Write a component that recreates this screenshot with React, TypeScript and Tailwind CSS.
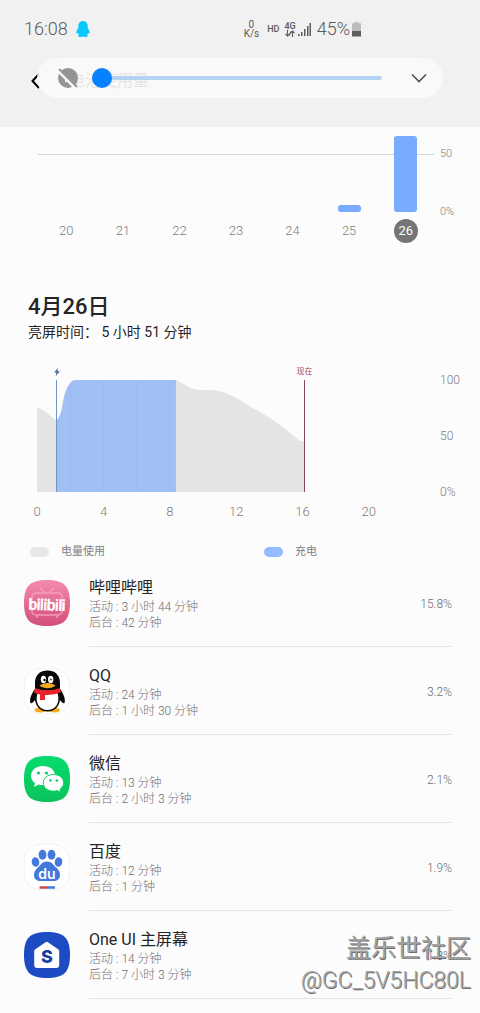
import React from "react";

const DAYS = [
  { day: "20", value: 0 },
  { day: "21", value: 0 },
  { day: "22", value: 0 },
  { day: "23", value: 0 },
  { day: "24", value: 0 },
  { day: "25", value: 7 },
  { day: "26", value: 76, selected: true },
];

const HOURS = ["0", "4", "8", "12", "16", "20"];

const APPS = [
  { name: "哔哩哔哩", active: "3 小时 44 分钟", background: "42 分钟", usage: "15.8%", icon: <BilibiliIcon /> },
  { name: "QQ", active: "24 分钟", background: "1 小时 30 分钟", usage: "3.2%", icon: <QQIcon /> },
  { name: "微信", active: "13 分钟", background: "2 小时 3 分钟", usage: "2.1%", icon: <WechatIcon /> },
  { name: "百度", active: "12 分钟", background: "1 分钟", usage: "1.9%", icon: <BaiduIcon /> },
  { name: "One UI 主屏幕", active: "14 分钟", background: "7 小时 3 分钟", usage: "1.8%", icon: <HomeIcon /> },
];

// rounded "squircle" shared by all launcher icons
const SQUIRCLE = "M23 0C40 0 46 6 46 23S40 46 23 46 0 40 0 23 6 0 23 0Z";

export default function App() {
  return (
    <div className="relative min-h-screen overflow-hidden bg-[#fcfcfc] font-[Roboto,'Noto_Sans_CJK_SC',sans-serif] text-[#252525]">
      <Header />
      <main>
        <DailyChart />
        <section className="px-7 pt-[50px]">
          <h2 className="text-[22px] leading-7 font-medium">4月26日</h2>
          <p className="text-sm leading-[22px]">亮屏时间： 5 小时 51 分钟</p>
        </section>
        <BatteryChart />
        <ul>
          {APPS.map((app) => (
            <AppRow key={app.name} {...app} />
          ))}
        </ul>
      </main>
      <Watermark />
    </div>
  );
}

function Header() {
  return (
    <header className="relative h-[127px] bg-[#f1f1f1]">
      <div className="flex h-[58px] items-center pl-6 text-[#5c5c5c]">
        <span className="text-[18px] leading-6 font-light">16:08</span>
        <svg className="ml-2 h-4 w-[14px]" viewBox="0 0 14 16" fill="#08c7fb">
          <path d="M7 0C4 0 2.300 2 2.300 5v2C1 9 0 11 .3 12.500c.3.500 1-.2 1.500-.7.2 1 .7 1.700 1.300 2.300-.8.300-1.100.8-1 1.400 1.500.7 3.500.6 4.900 0 1.400.6 3.400.7 4.900 0 .1-.6-.2-1.100-1-1.400.6-.6 1.100-1.300 1.300-2.300.5.5 1.200 1.200 1.500.7.3-1.500-.7-3.500-2-5.500V5C11.700 2 10 0 7 0Z" />
        </svg>
        <div className="ml-auto flex items-center pr-[119px]">
          <div className="text-center text-[10px] leading-[9px]">
            <div>0</div>
            <div>K/s</div>
          </div>
          <span className="ml-2 text-[9px] leading-3 font-medium">HD</span>
          <div className="ml-[5px] flex flex-col items-center">
            <span className="text-[9px] leading-[8px] font-medium">4G</span>
            <svg className="h-[7px] w-[10px]" viewBox="0 0 10 7" fill="none" stroke="currentColor" strokeWidth="1.1">
              <path d="M2.500 0v6M.5 4l2 2 2-2M7.500 7V1M5.500 3l2-2 2 2M4.200 5.500l1.800-4" />
            </svg>
          </div>
          <svg className="ml-[2px] h-[13px] w-[13px]" viewBox="0 0 13 13" fill="currentColor">
            <path d="M0 11h1.500v2H0zM3 9h1.500v4H3zM6 6h1.500v7H6zM9 3h1.500v10H9zM11.500 0H13v13h-1.500z" />
          </svg>
          <span className="ml-[6px] text-[18px] leading-6 font-light">45%</span>
          <svg className="ml-[2px] h-[15px] w-[9px]" viewBox="0 0 9 15">
            <path d="M2.500 0h4v1.200H9V9H0V1.200h2.500z" fill="#bdbdbd" />
            <path d="M0 9h9v5.500H0z" fill="#5c5c5c" />
          </svg>
        </div>
      </div>

      <div className="flex h-[46px] items-center pl-[31px]">
        <button aria-label="返回" className="text-black">
          <svg className="h-4 w-[9px]" viewBox="0 0 9 16" fill="none" stroke="currentColor" strokeWidth="2">
            <path d="M8 1 1.500 8 8 15" />
          </svg>
        </button>
        <h1 className="ml-[29px] text-base leading-6">电池使用量</h1>
      </div>

      <VolumePanel />
    </header>
  );
}

function VolumePanel() {
  return (
    <div className="absolute inset-x-[37px] top-[58px] flex h-10 items-center rounded-full bg-[#fafafa]/90 pr-4 pl-[21px]">
      <svg className="h-5 w-5 shrink-0" viewBox="0 0 20 20">
        <circle cx="10" cy="10" r="10" fill="#949494" />
        <path d="M7 8.500v6l5-3z" fill="#f9f9f9" />
        <path d="M-1 1 18 20" stroke="#fafafa" strokeWidth="4" />
        <path d="M1 1 19 19" stroke="#949494" strokeWidth="2" />
      </svg>
      <input
        type="range"
        aria-label="媒体音量"
        min="0"
        max="100"
        defaultValue="0"
        className="ml-[14px] h-5 min-w-0 flex-1 appearance-none bg-transparent [&::-webkit-slider-runnable-track]:h-1 [&::-webkit-slider-runnable-track]:rounded-full [&::-webkit-slider-runnable-track]:bg-[#b4d3f2] [&::-webkit-slider-thumb]:-mt-2 [&::-webkit-slider-thumb]:h-5 [&::-webkit-slider-thumb]:w-5 [&::-webkit-slider-thumb]:appearance-none [&::-webkit-slider-thumb]:rounded-full [&::-webkit-slider-thumb]:bg-[#0681ff]"
      />
      <button aria-label="展开" className="ml-[29px]">
        <svg className="h-[10px] w-4" viewBox="0 0 16 10" fill="none" stroke="#555" strokeWidth="1.700">
          <path d="M1 1.500 8 8.500l7-7" />
        </svg>
      </button>
    </div>
  );
}

function DailyChart() {
  return (
    <section className="flex pt-[9px] pl-[38px]">
      <div className="relative flex-1">
        <div className="absolute inset-x-0 top-[18px] h-px bg-[#d6d6d6]" />
        <div className="relative grid grid-cols-7">
          {DAYS.map((d) => (
            <div key={d.day} className="flex flex-col items-center">
              <div className="flex h-[76px] items-end">
                <div className="w-[23px] rounded-[3px] bg-[#79abff]" style={{ height: d.value }} />
              </div>
              <div
                className={`mt-[7px] flex h-6 w-6 items-center justify-center rounded-full text-[13px] leading-4 ${
                  d.selected ? "bg-[#757575] text-white" : "font-light text-[#7d7d7d]"
                }`}
              >
                {d.day}
              </div>
            </div>
          ))}
        </div>
      </div>
      <div className="flex h-[84px] w-[46px] flex-col justify-between pt-[10px] pl-[6px] text-[11px] leading-4 font-light text-[#7d7d7d]">
        <span>50</span>
        <span>0%</span>
      </div>
    </section>
  );
}

function BatteryChart() {
  return (
    <section className="pt-[37px]">
      <div className="flex pl-[37px]">
        <div className="relative flex-1">
          <svg className="block h-[112px] w-full" viewBox="0 0 398 112" preserveAspectRatio="none">
            <path
              d="M0 28C9 29 13 37 20 41V112H0ZM139 0C149 5 153 9 162 10C172 10 178 9 188 13C202 18 213 27 226 34C241 42 252 52 263 61H267V112H139Z"
              fill="#e4e4e4"
            />
            <path d="M20 40C24 35 25 28 26 22C28 11 31 3 37 0H139V112H20Z" fill="#9fbff5" />
            <path d="M33.500 3V112M66.500 0V112M99.500 0V112M132.500 0V112" stroke="#9abbf2" />
            <path d="M19.500 0V112" stroke="#7295c4" />
            <path d="M267.500 0V112" stroke="#874d55" />
          </svg>
          <svg className="absolute -top-3 left-[4.9%] h-2 w-[6px] -translate-x-1/2" viewBox="0 0 6 8" fill="#4c729f">
            <path d="M3.800 0 0 4.600h2.300L1.800 8 6 3.300H3.600z" />
          </svg>
          <span className="absolute -top-[14px] left-[67.2%] -translate-x-1/2 text-[8px] leading-3 whitespace-nowrap text-[#b0455a]">
            现在
          </span>
        </div>
        <div className="-my-2 flex w-[45px] flex-col justify-between pl-[5px] text-xs leading-4 font-light text-[#7d7d7d]">
          <span>100</span>
          <span>50</span>
          <span>0%</span>
        </div>
      </div>
      <div className="mt-3 mr-[78px] ml-1 grid grid-cols-6 text-center text-[13px] leading-4 font-light text-[#7d7d7d]">
        {HOURS.map((h) => (
          <span key={h}>{h}</span>
        ))}
      </div>
      <div className="mt-[25px] grid grid-cols-[234px_1fr] pl-[30px] text-[11px] leading-[14px] text-[#828282]">
        <div className="flex items-center gap-3">
          <span className="h-[10px] w-[19px] rounded-full bg-[#e8e8e8]" />
          电量使用
        </div>
        <div className="flex items-center gap-3">
          <span className="h-[10px] w-[19px] rounded-full bg-[#94baff]" />
          充电
        </div>
      </div>
    </section>
  );
}

function AppRow({
  name,
  active,
  background,
  usage,
  icon,
}: {
  name: string;
  active: string;
  background: string;
  usage: string;
  icon: React.ReactNode;
}) {
  return (
    <li className="flex h-[88px] items-stretch pr-7 pl-6">
      <div className="flex w-[65px] items-center">{icon}</div>
      <div className="flex flex-1 items-center justify-between border-b border-[#e3e3e3] pt-[3px]">
        <div>
          <div className="text-base leading-[22px]">{name}</div>
          <div className="text-xs leading-4 font-light text-[#6e6e6e]">活动 : {active}</div>
          <div className="text-xs leading-4 font-light text-[#6e6e6e]">后台 : {background}</div>
        </div>
        <span className="text-xs leading-4 font-light text-[#6e6e6e]">{usage}</span>
      </div>
    </li>
  );
}

function Watermark() {
  return (
    <div className="absolute right-[9px] bottom-[16px] text-right text-[#a3a3a3] [text-shadow:1px_1px_0_#707070]">
      <div className="text-[25px] leading-8">盖乐世社区</div>
      <div className="text-[23px] leading-8 font-light">@GC_5V5HC80L</div>
    </div>
  );
}

function BilibiliIcon() {
  return (
    <svg className="h-[46px] w-[46px]" viewBox="0 0 46 46">
      <defs>
        <linearGradient id="bili" x1="0" y1="0" x2="0" y2="1">
          <stop offset="0" stopColor="#f48bad" />
          <stop offset="1" stopColor="#d24e78" />
        </linearGradient>
      </defs>
      <path d={SQUIRCLE} fill="url(#bili)" />
      <g fill="none" stroke="#f9aac4" strokeWidth="2" opacity=".6">
        <rect x="8" y="13" width="30" height="22" rx="4" />
        <path d="m16 8 5 5M30 8l-5 5M13 36v2M33 36v2" />
      </g>
      <text
        x="23"
        y="30"
        textAnchor="middle"
        fill="#fff"
        stroke="#fff"
        strokeWidth="0.8"
        fontFamily="'Liberation Sans', sans-serif"
        fontSize="15"
        transform="rotate(2 23 23)"
      >
        bilibili
      </text>
    </svg>
  );
}

function QQIcon() {
  return (
    <svg className="h-[46px] w-[46px]" viewBox="0 0 46 46">
      <path d={SQUIRCLE} fill="#fff" stroke="#ececec" strokeWidth="0.8" />
      <ellipse cx="16.500" cy="42" rx="6" ry="2.500" fill="#f6ab1c" />
      <ellipse cx="30" cy="42" rx="6" ry="2.500" fill="#f6ab1c" />
      <path
        d="M23.500 2.500C15 2.500 11 8 11 15v6C8 25 5 31 6.500 35c1 1 3-1 4.500-3 1 7 6 11.500 12.500 11.500S35 39 36 32c1.500 2 3.500 4 4.500 3C42 31 39 25 36 21v-6C36 8 32 2.500 23.500 2.500Z"
        fill="#080808"
      />
      <path d="M13.500 25c-3 10 2 17 10 17S36.500 35 33.500 25Z" fill="#fff" />
      <path d="M11 20c8 3 17 3 25 0l1 4c-3 2-9 3-16 3v5h-5v-5.500c-3-.5-5-1-6-2.500Z" fill="#e9232b" />
      <ellipse cx="19.500" cy="11.500" rx="2.700" ry="3.700" fill="#fff" />
      <ellipse cx="26.700" cy="11.500" rx="2.700" ry="3.700" fill="#fff" />
      <circle cx="20.500" cy="12" r="1.200" />
      <path d="M25.500 12q1.200-2 2.400 0" fill="none" stroke="#000" />
      <path d="M15.500 17.500c5-3.500 11-3.500 16 0-4 3.500-12 3.500-16 0Z" fill="#f6ab1c" />
    </svg>
  );
}

function WechatIcon() {
  return (
    <svg className="h-[46px] w-[46px]" viewBox="0 0 46 46">
      <defs>
        <linearGradient id="wechat" x1="0" y1="0" x2="0" y2="1">
          <stop offset="0" stopColor="#05dc6e" />
          <stop offset="1" stopColor="#0bc25b" />
        </linearGradient>
      </defs>
      <path d={SQUIRCLE} fill="url(#wechat)" />
      <path d="M19 10C12 10 7 14 7 20c0 3 1.500 5.500 4 7l-1 4 4.500-2.500c1.500.5 3 .5 4.500.5 7 0 12-4 12-9.500S26 10 19 10Z" fill="#fff" />
      <path
        d="M29.500 18.500c-6 0-10.200 3.500-10.200 8.300s4.200 8.400 10.200 8.400c1.300 0 2.600-.2 3.800-.6l3.600 2-1-3.200c2.300-1.600 3.800-3.900 3.800-6.600 0-4.800-4.200-8.300-10.200-8.300Z"
        fill="#fff"
        stroke="#07ce62"
      />
      <g fill="#07ce62">
        <circle cx="14.500" cy="17" r="1.600" />
        <circle cx="22.500" cy="17" r="1.600" />
        <circle cx="26.300" cy="24.500" r="1.300" />
        <circle cx="32.800" cy="24.500" r="1.300" />
      </g>
    </svg>
  );
}

function BaiduIcon() {
  return (
    <svg className="h-[46px] w-[46px]" viewBox="0 0 46 46">
      <path d={SQUIRCLE} fill="#fff" stroke="#ececec" strokeWidth="0.8" />
      <g fill="#4379df">
        <ellipse cx="11.500" cy="18" rx="3.800" ry="4.700" transform="rotate(-8 11.500 18)" />
        <ellipse cx="18.500" cy="10.700" rx="3.900" ry="5" />
        <ellipse cx="27.500" cy="10.700" rx="3.900" ry="5" />
        <ellipse cx="34.500" cy="18" rx="3.800" ry="4.700" transform="rotate(8 34.500 18)" />
        <path d="M23 17.500c-4.500 0-6 3-8.500 5.500-3 2.500-4.500 4.500-4.500 8 0 4 3 6 6.500 6h13c3.500 0 6.500-2 6.500-6 0-3.500-1.500-5.500-4.500-8-2.500-2.500-4-5.500-8.500-5.500Z" />
      </g>
      <text x="23" y="34.500" textAnchor="middle" fill="#fff" fontFamily="Inter, sans-serif" fontSize="14" fontWeight="600">
        du
      </text>
      <path d="M15.500 43.500H24" stroke="#c94d4d" strokeWidth="2.500" />
      <path d="M24 43.500h7" stroke="#4379df" strokeWidth="2.500" />
    </svg>
  );
}

function HomeIcon() {
  return (
    <svg className="h-[46px] w-[46px]" viewBox="0 0 46 46">
      <path d={SQUIRCLE} fill="#1d4bc3" />
      <path
        d="M21.500 10.200 11 17.500q-.8.600-.8 1.600V33q0 3 3 3h19q3 0 3-3V19.100q0-1-.8-1.600L24 10.200q-1.250-.8-2.500 0Z"
        fill="#fff"
      />
      <text x="23" y="31" textAnchor="middle" fill="#173fa0" fontFamily="Inter, sans-serif" fontSize="18" fontWeight="800">
        S
      </text>
    </svg>
  );
}
